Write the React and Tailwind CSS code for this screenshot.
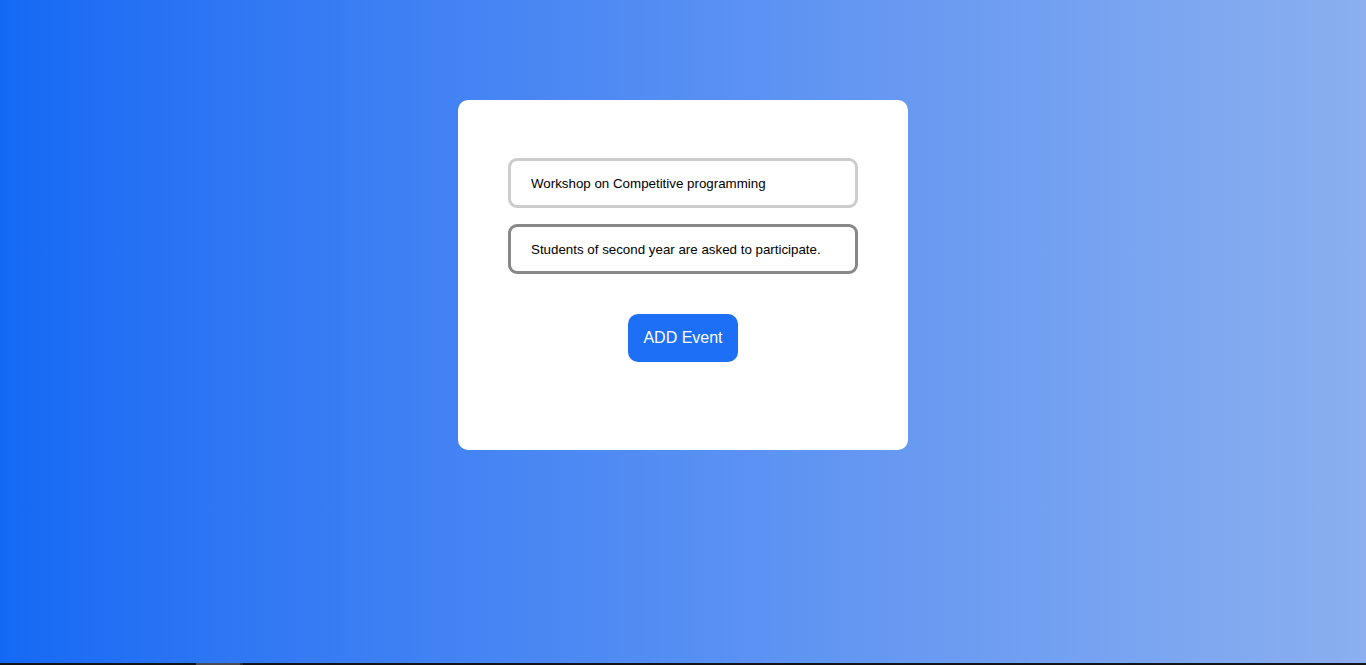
import { useState } from 'react'

function App() {
  const [title, setTitle] = useState('Workshop on Competitive programming')
  const [desc, setDesc] = useState('Students of second year are asked to participate.')

  return (
    <div className="h-[665px] w-full overflow-hidden font-['Liberation_Sans',Arial,sans-serif]">
      <div className="h-[663px] w-full bg-gradient-to-r from-[#1469f4] to-[#8bafef] flex justify-center pt-[100px]">
        <div className="w-[450px] h-[350px] bg-white rounded-[10px] flex flex-col items-center pt-[58px]">
          <input
            value={title}
            onChange={(e) => setTitle(e.target.value)}
            className="w-[350px] h-[50px] border-[3px] border-[#cccccc] rounded-[9px] pl-[20px] text-[13.33px] text-black outline-none"
          />
          <input
            autoFocus
            value={desc}
            onChange={(e) => setDesc(e.target.value)}
            className="mt-[16px] w-[350px] h-[50px] border-[3px] border-[#888888] rounded-[9px] pl-[20px] text-[13.33px] text-black outline-none caret-black"
          />
          <button className="mt-[40px] w-[110px] h-[48px] bg-[#1d6ff5] text-white text-[16px] rounded-[10px]">
            ADD Event
          </button>
        </div>
      </div>
      <div className="h-[2px] w-full bg-[#141418] flex">
        <div className="ml-[196px] w-[44px] h-full bg-[#4a4a50]"></div>
        <div className="w-[3px] h-full bg-[#2a2a30]"></div>
      </div>
    </div>
  )
}

export default App
